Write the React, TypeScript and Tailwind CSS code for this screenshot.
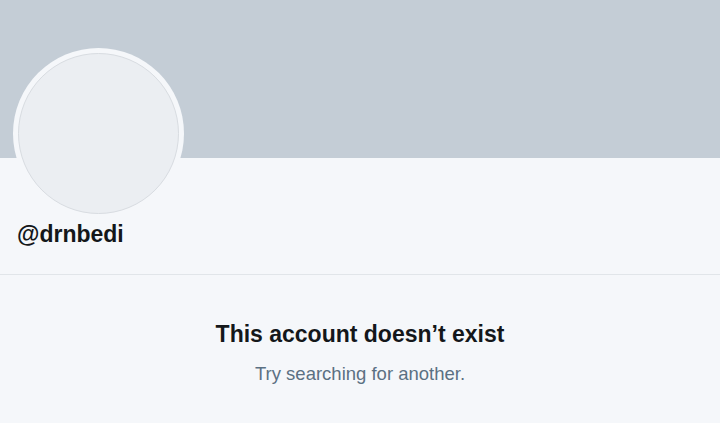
export default function App() {
  return (
    <div className="w-full min-h-screen bg-[#f5f7fa] font-['Liberation_Sans',Arial,sans-serif] overflow-hidden">
      <div className="h-[158px] bg-[#c4cdd6]" />
      <div className="border-b border-[#e1e5e9] pb-[27px]">
        <div className="pl-[13px]">
          <div className="-mt-[110px] w-[171px] h-[171px] rounded-full bg-[#f5f7fa] p-[5px]">
            <div className="w-full h-full rounded-full bg-[#ebeef2] border border-[#d8dce1]" />
          </div>
        </div>
        <div className="mt-[2px] pl-[17px] text-[23px] leading-[26px] font-bold text-[#14171a]">
          @drnbedi
        </div>
      </div>
      <div className="pt-[45px] flex flex-col items-center text-center">
        <h1 className="text-[23px] leading-[28px] font-bold text-[#14171a]">
          This account doesn’t exist
        </h1>
        <p className="mt-[15px] text-[18.5px] leading-[22px] text-[#5b7083]">
          Try searching for another.
        </p>
      </div>
    </div>
  );
}
